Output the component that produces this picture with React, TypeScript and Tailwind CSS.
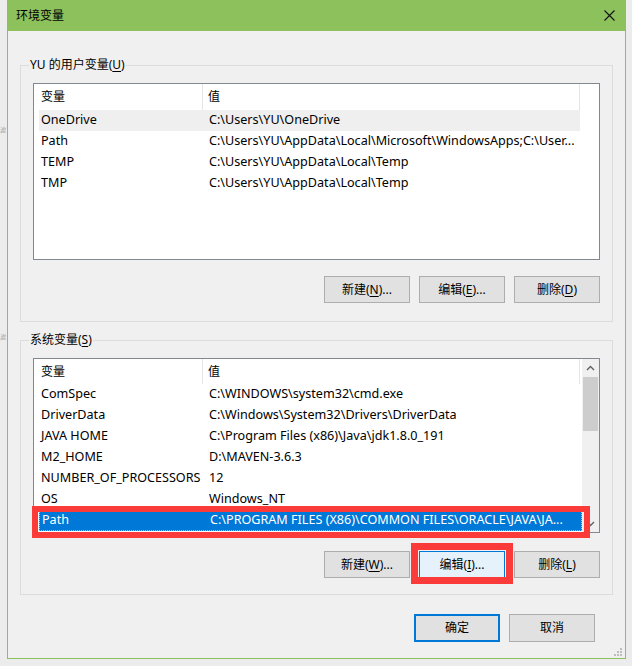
import type { ReactNode } from 'react';

type Row = { name: string; value: string };

const userRows: Row[] = [
  { name: 'OneDrive', value: 'C:\\Users\\YU\\OneDrive' },
  { name: 'Path', value: 'C:\\Users\\YU\\AppData\\Local\\Microsoft\\WindowsApps;C:\\User...' },
  { name: 'TEMP', value: 'C:\\Users\\YU\\AppData\\Local\\Temp' },
  { name: 'TMP', value: 'C:\\Users\\YU\\AppData\\Local\\Temp' },
];

const systemRows: Row[] = [
  { name: 'ComSpec', value: 'C:\\WINDOWS\\system32\\cmd.exe' },
  { name: 'DriverData', value: 'C:\\Windows\\System32\\Drivers\\DriverData' },
  { name: 'JAVA HOME', value: 'C:\\Program Files (x86)\\Java\\jdk1.8.0_191' },
  { name: 'M2_HOME', value: 'D:\\MAVEN-3.6.3' },
  { name: 'NUMBER_OF_PROCESSORS', value: '12' },
  { name: 'OS', value: 'Windows_NT' },
  { name: 'Path', value: 'C:\\PROGRAM FILES (X86)\\COMMON FILES\\ORACLE\\JAVA\\JA...' },
];

function Key({ children }: { children: ReactNode }) {
  return <span className="underline underline-offset-2">{children}</span>;
}

function Btn({ children, focused }: { children: ReactNode; focused?: boolean }) {
  return (
    <button
      className={
        focused
          ? 'flex h-[27px] w-[86px] items-center justify-center border border-[#0078d7] bg-[#e5f1fb] text-[12px] text-black'
          : 'flex h-[27px] w-[86px] items-center justify-center border border-[#adadad] bg-[#e1e1e1] text-[12px] text-black'
      }
    >
      {children}
    </button>
  );
}

function ListHeader({ h }: { h: string }) {
  return (
    <div className={`flex ${h} shrink-0 items-center`}>
      <div className="flex h-full w-[169px] items-center border-r border-[#e5e5e5] pl-[7px]">变量</div>
      <div className="flex h-full w-[377px] items-center border-r border-[#e5e5e5] pl-[5px]">值</div>
    </div>
  );
}

function ListRow({ row, state }: { row: Row; state?: 'hover' | 'selected' }) {
  let cls = 'flex h-[21px] w-[541px] items-center';
  if (state === 'hover') cls = 'flex h-[21px] w-[541px] items-center bg-[#efefef]';
  if (state === 'selected')
    cls = 'flex h-[21px] w-[543px] items-center border border-dotted border-[#f0b060] bg-[#0078d7] text-white';
  return (
    <div className="pl-[5px] text-[12.6px]">
      <div className={cls}>
        <div className="w-[164px] truncate whitespace-nowrap pl-[2px]">{row.name}</div>
        <div className="whitespace-nowrap pl-[6px]">{row.value}</div>
      </div>
    </div>
  );
}

function ScrollBar() {
  return (
    <div className="flex w-[17px] shrink-0 flex-col bg-[#f0f0f0]">
      <div className="flex h-[17px] items-center justify-center">
        <svg width="9" height="6" viewBox="0 0 9 6">
          <path d="M1 5 L4.5 1.5 L8 5" fill="none" stroke="#606060" strokeWidth="1.4" />
        </svg>
      </div>
      <div className="mx-[1px] mt-[1px] h-[54px] bg-[#cdcdcd]" />
      <div className="flex-1" />
      <div className="flex h-[17px] items-center justify-center">
        <svg width="9" height="6" viewBox="0 0 9 6">
          <path d="M1 1 L4.5 4.5 L8 1" fill="none" stroke="#606060" strokeWidth="1.4" />
        </svg>
      </div>
    </div>
  );
}

function Group({ label, children, className }: { label: ReactNode; children: ReactNode; className: string }) {
  return (
    <div className={`relative mx-[12px] border border-[#dcdcdc] px-[12px] ${className}`}>
      <div className="absolute -top-[9px] left-[8px] bg-[#f0f0f0] px-[1px] leading-[16px]">{label}</div>
      {children}
    </div>
  );
}

export default function App() {
  return (
    <div className="relative flex h-[666px] w-[632px] overflow-hidden bg-[#ececec] font-['Noto_Sans','Noto_Sans_CJK_SC',sans-serif] text-[12px] text-black">
      <div className="flex w-[7px] shrink-0 flex-col items-start text-[6px] leading-[8px] text-[#9a9a9a]">
        <span className="mt-[126px]">滤</span>
        <span className="mt-[199px]">滤</span>
      </div>

      <div className="relative flex h-[659px] w-[619px] shrink-0 flex-col border-x border-b border-[#8cc05a] bg-[#f0f0f0]">
        <div className="flex h-[31px] shrink-0 items-center justify-between bg-[#8dc15c] pl-[8px] pr-[10px]">
          <span className="text-[12px]">环境变量</span>
          <svg width="11" height="11" viewBox="0 0 11 11">
            <path d="M0.5 0.5 L10.5 10.5 M10.5 0.5 L0.5 10.5" stroke="#111" strokeWidth="1.1" />
          </svg>
        </div>

        <Group
          className="mt-[34px] pb-[18px] pt-[17px]"
          label={
            <>
              YU 的用户变量(<Key>U</Key>)
            </>
          }
        >
          <div className="flex h-[177px] flex-col border border-[#828790] bg-white">
            <ListHeader h="h-[26px]" />
            {userRows.map((r, i) => (
              <ListRow key={r.name + i} row={r} state={i === 0 ? 'hover' : undefined} />
            ))}
          </div>
          <div className="mt-[16px] flex justify-end gap-[9px]">
            <Btn>
              新建(<Key>N</Key>)...
            </Btn>
            <Btn>
              编辑(<Key>E</Key>)...
            </Btn>
            <Btn>
              删除(<Key>D</Key>)
            </Btn>
          </div>
        </Group>

        <Group
          className="mt-[18px] pb-[16px] pt-[17px]"
          label={
            <>
              系统变量(<Key>S</Key>)
            </>
          }
        >
          <div className="flex h-[175px] border border-[#828790] bg-white">
            <div className="flex flex-1 flex-col overflow-hidden">
              <ListHeader h="h-[25px]" />
              {systemRows.map((r, i) => (
                <ListRow key={r.name + i} row={r} state={i === systemRows.length - 1 ? 'selected' : undefined} />
              ))}
            </div>
            <ScrollBar />
          </div>
          <div className="mt-[18px] flex justify-end gap-[9px]">
            <Btn>
              新建(<Key>W</Key>)...
            </Btn>
            <Btn focused>
              编辑(<Key>I</Key>)...
            </Btn>
            <Btn>
              删除(<Key>L</Key>)
            </Btn>
          </div>
        </Group>

        <div className="mt-[19px] flex justify-end gap-[9px] pr-[30px]">
          <button className="flex h-[28px] w-[86px] items-center justify-center border-2 border-[#0078d7] bg-[#e1e1e1] text-[12px]">
            确定
          </button>
          <button className="flex h-[28px] w-[86px] items-center justify-center border border-[#adadad] bg-[#e1e1e1] text-[12px]">
            取消
          </button>
        </div>

        <svg className="absolute bottom-[2px] right-[3px]" width="9" height="9" viewBox="0 0 9 9">
          <rect x="7" y="1" width="2" height="2" fill="#bdbdbd" />
          <rect x="4" y="4" width="2" height="2" fill="#bdbdbd" />
          <rect x="7" y="4" width="2" height="2" fill="#bdbdbd" />
          <rect x="1" y="7" width="2" height="2" fill="#bdbdbd" />
          <rect x="4" y="7" width="2" height="2" fill="#bdbdbd" />
          <rect x="7" y="7" width="2" height="2" fill="#bdbdbd" />
        </svg>
      </div>

      <div className="pointer-events-none absolute left-[32px] top-[506px] h-[32px] w-[558px] border-[6px] border-[#fb3a3a]" />
      <div className="pointer-events-none absolute left-[411px] top-[543px] h-[41px] w-[102px] border-[7px] border-[#fb3a3a]" />
    </div>
  );
}
